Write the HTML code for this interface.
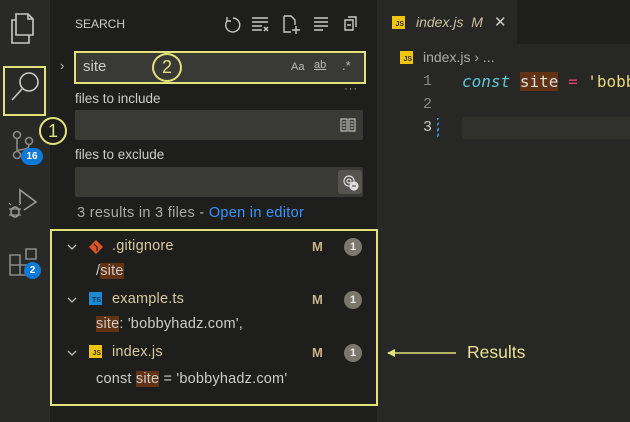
<!DOCTYPE html>
<html><head><style>
*{margin:0;padding:0;box-sizing:border-box}
body{width:630px;height:422px;overflow:hidden;background:#272725;font-family:"Liberation Sans","DejaVu Sans",sans-serif;position:relative;color:#ccc}
.a{position:absolute}
.t{position:absolute;white-space:nowrap}
.inp{position:absolute;background:#393936;border-radius:2px}
.badge{position:absolute;width:18px;height:18px;border-radius:9px;background:#7a776c;color:#eee;font-size:11px;text-align:center;line-height:18px;font-weight:bold}
.hl{background:#613214}
.js{position:absolute;width:13px;height:13px;background:#f1c40f;color:#333;font-size:7px;font-weight:bold;text-align:right;line-height:17px;padding-right:1px}
.r{font-size:14.5px;letter-spacing:0.2px}
</style></head><body>
<div class="a" style="left:0;top:0;width:50px;height:422px;background:#292927"></div>
<div class="a" style="left:50px;top:0;width:327px;height:422px;background:#1e1e1c"></div>
<div class="a" style="left:377px;top:0;width:253px;height:44px;background:#1f1f1d"></div>
<div class="a" style="left:377px;top:0;width:140px;height:44px;background:#272725"></div>

<svg class="a" style="left:0;top:0" width="60" height="300" fill="none" stroke="#c8c8c8" stroke-width="1.6">
 <path d="M16 14h12l5 5v16H16z M28 14v5h5 M16 20h-4v23h17v-8"/>
 <circle cx="29" cy="82" r="9"/><path d="M22 89l-10 11"/>
 <circle cx="17" cy="135" r="3.5" stroke="#8a8a88"/><circle cx="17" cy="155" r="3.5" stroke="#8a8a88"/><circle cx="29" cy="141" r="3.5" stroke="#8a8a88"/><path d="M17 139v12 M29 145c0 6-12 4-12 6" stroke="#8a8a88"/>
 <path d="M20 203v-13l16 12-12 8" stroke="#9a9a98"/><ellipse cx="15" cy="212" rx="4" ry="5" stroke="#9a9a98"/><path d="M9 209h12 M9 215h12 M11 205l-2-2 M19 205l2-2" stroke="#9a9a98" stroke-width="1.2"/>
 <path d="M10 255h10v20H10z M10 265h20v10H20 M26 249h10v10H26z" stroke="#8a8a88"/>
</svg>
<div class="a" style="left:3px;top:66px;width:43px;height:50px;border:2px solid #e2e27a"></div>
<div class="a" style="left:39px;top:117px;width:28px;height:28px;border:2px solid #e2e27a;border-radius:50%;color:#e2e27a;font-size:18px;text-align:center;line-height:24px;background:#1e1e1c">1</div>
<div class="a" style="left:21px;top:148px;width:22px;height:17px;border-radius:9px;background:#0f7ad6;color:#fff;font-size:10px;font-weight:bold;text-align:center;line-height:17px">16</div>
<div class="a" style="left:24px;top:262px;width:17px;height:17px;border-radius:9px;background:#0f7ad6;color:#fff;font-size:10px;font-weight:bold;text-align:center;line-height:17px">2</div>

<div class="t" style="left:75px;top:17px;font-size:12px;color:#ccc">SEARCH</div>
<svg class="a" style="left:220px;top:12px" width="150" height="24" fill="none" stroke="#c8c8c8" stroke-width="1.4">
 <path d="M13 6a7 7 0 1 1-6 3 M7 5v4h4"/>
 <path d="M32 6h16 M32 10h16 M32 14h10 M32 18h10 M44 15l4 4 M48 15l-4 4"/>
 <path d="M64 4h7l4 4v5 M64 4v16h7 M76 14v8 M72 18h8"/>
 <path d="M94 6h14 M94 10h14 M94 14h14 M94 18h9"/>
 <path d="M125 8h8v10h-8z M128 5h8v10 M127 13h4"/>
</svg>
<div class="t" style="left:60px;top:58px;font-size:13px;color:#bbb">›</div>
<div class="inp" style="left:75px;top:52px;width:290px;height:31px"></div>
<div class="a" style="left:74px;top:51px;width:292px;height:33px;border:2px solid #e2e27a"></div>
<div class="t" style="left:83px;top:58px;font-size:15px;color:#ccc">site</div>
<div class="a" style="left:152px;top:53px;width:30px;height:29px;border:2px solid #e2e27a;border-radius:50%;color:#e2e27a;font-size:18px;text-align:center;line-height:25px">2</div>
<div class="t" style="left:291px;top:61px;font-size:11px;color:#bbb">Aa</div>
<div class="t" style="left:314px;top:59px;font-size:11px;color:#bbb;text-decoration:underline">ab</div>
<div class="t" style="left:342px;top:58px;font-size:13px;color:#bbb">.*</div>
<div class="t" style="left:344px;top:83px;font-size:11px;color:#bbb;letter-spacing:1px">···</div>
<div class="t" style="left:75px;top:91px;font-size:13.5px;color:#ccc">files to include</div>
<div class="inp" style="left:75px;top:110px;width:288px;height:30px"></div>
<svg class="a" style="left:339px;top:117px" width="18" height="16" fill="none" stroke="#bbb" stroke-width="1.2"><path d="M2 2h6v12H2z M10 2h6v12h-6z M3.5 5h3 M3.5 8h3 M3.5 11h3 M11.5 5h3 M11.5 8h3 M11.5 11h3"/></svg>
<div class="t" style="left:75px;top:147px;font-size:13.5px;color:#ccc">files to exclude</div>
<div class="inp" style="left:75px;top:167px;width:288px;height:30px"></div>
<div class="a" style="left:338px;top:170px;width:24px;height:24px;background:#555450;border-radius:3px"></div>
<svg class="a" style="left:341px;top:173px" width="18" height="18" fill="none" stroke="#ddd" stroke-width="1.2"><circle cx="8" cy="8" r="5"/><circle cx="8" cy="8" r="2"/><circle cx="13" cy="13" r="4" fill="#ddd"/><path d="M11 13h4" stroke="#555"/></svg>
<div class="t" style="left:77px;top:205px;font-size:14.5px;letter-spacing:0.3px;color:#aaa">3 results in 3 files - <span style="color:#3794ff">Open in editor</span></div>

<div class="a" style="left:50px;top:229px;width:328px;height:177px;border:2px solid #e2e27a"></div>
<svg class="a" style="left:64px;top:240px" width="20" height="130" fill="none" stroke="#bbb" stroke-width="1.3"><path d="M4 5l4 4 4-4 M4 58l4 4 4-4 M4 111l4 4 4-4"/></svg>
<svg class="a" style="left:88px;top:239px" width="16" height="16"><path d="M8 1l7 7-7 7-7-7z" fill="#e0522c"/><path d="M6 5l3 3v4" stroke="#1e1e1c" stroke-width="1.2" fill="none"/></svg>
<div class="t r" style="left:112px;top:238px;color:#d8c9a0">.gitignore</div>
<div class="t r" style="left:96px;top:263px;color:#ccc">/<span class="hl">site</span></div>
<div class="a" style="left:89px;top:292px;width:13px;height:13px;background:#1e88d0;color:#0a3a60;font-size:7px;font-weight:bold;text-align:right;line-height:17px;padding-right:1px">TS</div>
<div class="t r" style="left:112px;top:291px;color:#d8c9a0">example.ts</div>
<div class="t r" style="left:96px;top:316px;color:#ccc"><span class="hl">site</span>: 'bobbyhadz.com',</div>
<div class="js" style="left:89px;top:345px">JS</div>
<div class="t r" style="left:112px;top:344px;color:#d8c9a0">index.js</div>
<div class="t r" style="left:96px;top:371px;color:#ccc">const <span class="hl">site</span> = 'bobbyhadz.com'</div>
<div class="t" style="left:312px;top:292px;font-size:13px;color:#c9b48a;font-weight:bold">M</div>
<div class="t" style="left:312px;top:239px;font-size:13px;color:#c9b48a;font-weight:bold">M</div>
<div class="t" style="left:312px;top:345px;font-size:13px;color:#c9b48a;font-weight:bold">M</div>
<div class="badge" style="left:344px;top:238px">1</div>
<div class="badge" style="left:344px;top:291px">1</div>
<div class="badge" style="left:344px;top:344px">1</div>

<svg class="a" style="left:384px;top:346px" width="75" height="14"><path d="M4 7h68" stroke="#e2e27a" stroke-width="1.6"/><path d="M3 7l8-4v8z" fill="#e2e27a"/></svg>
<div class="t" style="left:467px;top:342px;font-size:17.5px;color:#e8e394">Results</div>

<div class="js" style="left:392px;top:16px">JS</div>
<div class="t" style="left:416px;top:14px;font-size:14px;color:#c9c0a0;font-style:italic">index.js&nbsp; M</div>
<div class="t" style="left:494px;top:13px;font-size:15px;color:#ccc">✕</div>
<div class="js" style="left:400px;top:51px">JS</div>
<div class="t" style="left:423px;top:49px;font-size:14px;color:#aaa">index.js › ...</div>
<div class="a" style="left:462px;top:117px;width:168px;height:22px;background:#31312e"></div>
<div class="t" style="left:423px;top:73px;font-size:15px;color:#888;font-family:'Liberation Mono',monospace">1</div>
<div class="t" style="left:423px;top:96px;font-size:15px;color:#888;font-family:'Liberation Mono',monospace">2</div>
<div class="t" style="left:423px;top:119px;font-size:15px;color:#ccc;font-family:'Liberation Mono',monospace">3</div>
<div class="a" style="left:437px;top:118px;width:2px;height:20px;background:repeating-linear-gradient(135deg,#3a8fc8 0 2px,transparent 2px 4px)"></div>
<div class="t" style="left:462px;top:72px;font-size:16px;font-family:'DejaVu Sans Mono','Liberation Mono',monospace;color:#ddd"><i style="color:#5fc7d8">const</i> <span class="hl">site</span> <span style="color:#e0407a">=</span> <span style="color:#e6db74">'bobb</span></div>
</body></html>
